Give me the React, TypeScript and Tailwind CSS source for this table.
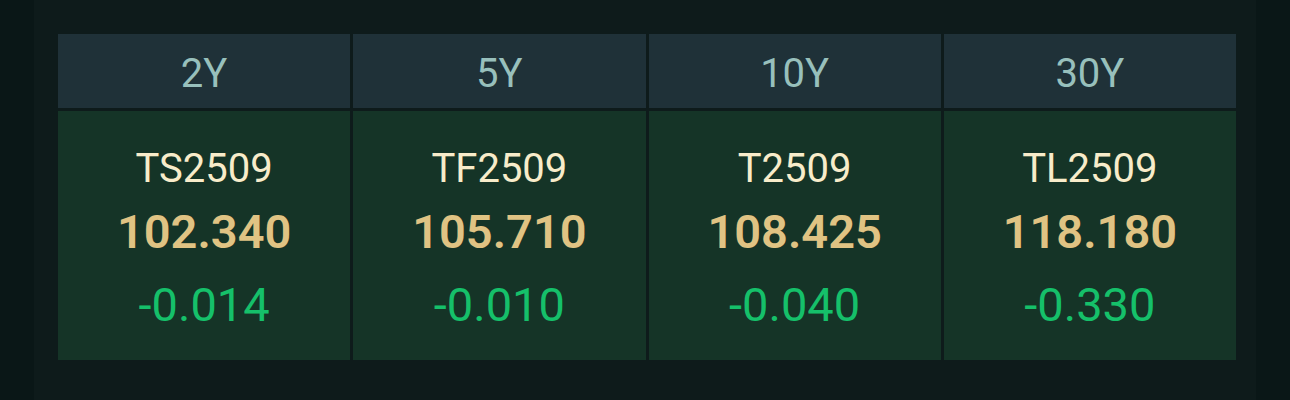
import React from 'react';

const contracts = [
  { tenor: '2Y', code: 'TS2509', price: '102.340', change: '-0.014' },
  { tenor: '5Y', code: 'TF2509', price: '105.710', change: '-0.010' },
  { tenor: '10Y', code: 'T2509', price: '108.425', change: '-0.040' },
  { tenor: '30Y', code: 'TL2509', price: '118.180', change: '-0.330' },
];

const App = () => {
  return (
    <div
      className="w-full h-[400px] bg-[#0a1717] px-[34px] overflow-hidden"
      style={{ fontFamily: 'Roboto, "Noto Sans", sans-serif' }}
    >
      <div className="h-full bg-[#0e1b1b] pt-[34px] pl-6 pr-5">
        <div className="grid grid-cols-4 gap-[3px]">
          {contracts.map((item) => (
            <div
              key={item.tenor}
              className="h-[74px] bg-[#1f3138] flex items-center justify-center pt-[6px] text-[40px] text-[#98c0bc]"
            >
              {item.tenor}
            </div>
          ))}
          {contracts.map((item) => (
            <div
              key={item.code}
              className="h-[249px] bg-[#153427] flex flex-col items-center pt-[34px]"
            >
              <div className="text-[40px] leading-[48px] text-[#f8ecca]">{item.code}</div>
              <div className="mt-[11px] text-[47px] leading-[56px] font-semibold text-[#e0c383]">
                {item.price}
              </div>
              <div className="mt-[17px] text-[47px] leading-[56px] text-[#15c06a]">
                {item.change}
              </div>
            </div>
          ))}
        </div>
      </div>
    </div>
  );
};

export default App;
